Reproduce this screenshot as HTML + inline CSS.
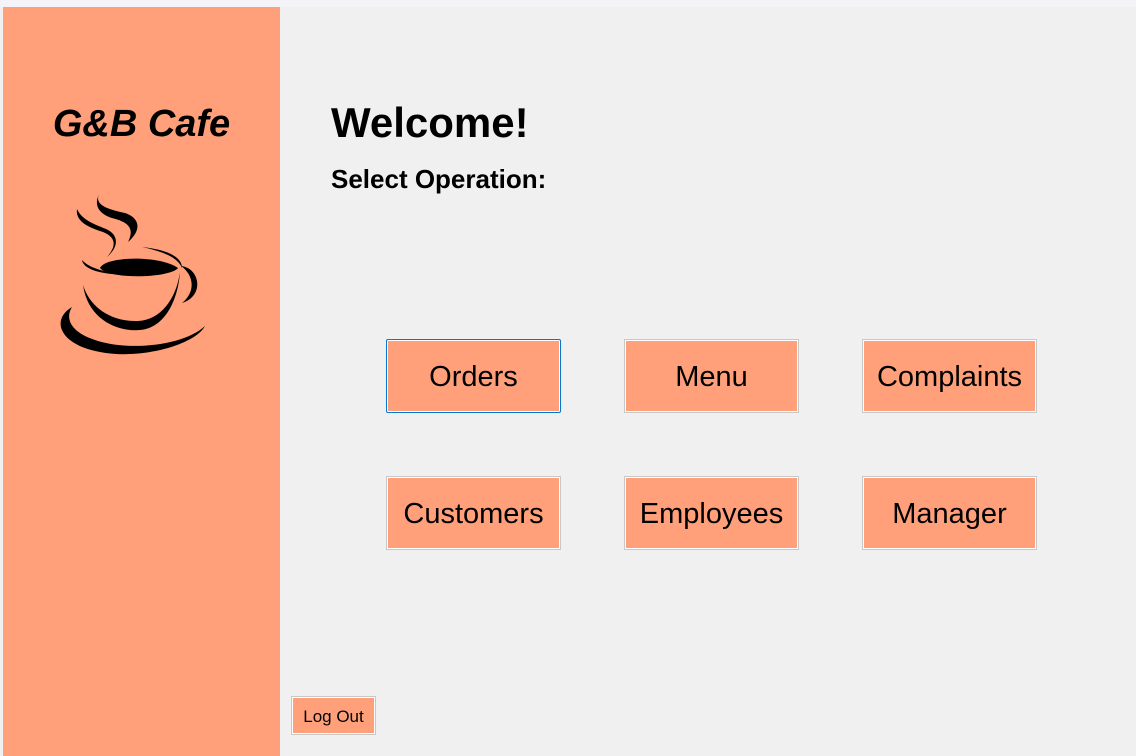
<!DOCTYPE html>
<html><head><style>
body{margin:0;width:1136px;height:756px;background:#f0f0f0;position:relative;overflow:hidden;font-family:"Segoe UI","Liberation Sans","DejaVu Sans",sans-serif}
.top{position:absolute;left:0;top:0;width:1136px;height:7px;background:#f3f3f8}
.edge{position:absolute;left:0;top:7px;width:3px;height:749px;background:#f0f0f0;border-right:0}
.side{position:absolute;left:3px;top:7px;width:277px;height:749px;background:#ffa07a}
.title{position:absolute;left:0;width:283px;top:103px;text-align:center;font-weight:bold;font-style:italic;font-size:38px;color:#000}
h1{position:absolute;left:331px;top:99px;margin:0;font-size:42px;font-weight:bold;color:#000}
h2{position:absolute;left:331px;top:164px;margin:0;font-size:26px;font-weight:bold;color:#000}
.b{position:absolute;width:173px;height:72px;background:#ffa07a;border:1px solid #c8c8c8;box-shadow:inset 0 0 0 1px #fff;display:flex;align-items:center;justify-content:center;font-size:29px;color:#000;box-sizing:content-box;padding-top:2px;height:70px}
.lo{position:absolute;left:291px;top:696px;width:83px;height:37px;background:#ffa07a;border:1px solid #c8c8c8;box-shadow:inset 0 0 0 1px #fff;display:flex;align-items:center;justify-content:center;font-size:17px;padding-top:2px;height:35px}
</style></head><body>
<div class="top"></div>
<div class="edge"></div>
<div class="side"></div>
<div class="title">G&amp;B Cafe</div>
<svg style="position:absolute;left:0;top:0" width="283" height="380" viewBox="0 0 283 380">
<path d="M100 193 C92 205 110 210 125 213 C140 218 142 230 128 242 C135 228 128 222 112 218 C96 213 94 202 100 193Z" fill="#000"/>
<path d="M77 209 C75 222 90 228 103 232 C118 238 115 248 107 257 C120 246 118 234 106 229 C94 224 82 220 77 209Z" fill="#000"/>
<path d="M100 268 C105 256 160 255 178 268 C170 278 110 280 100 268Z" fill="#000"/>
<path d="M142 247 C170 250 182 258 182 268 C178 258 165 252 142 247Z" fill="#000"/>
<path d="M82 260 C84 275 130 280 180 268 C140 278 95 275 82 260Z" fill="#000"/>
<path d="M83 285 C88 320 118 332 140 330 C165 328 178 300 180 272 C176 300 160 320 138 321 C112 322 90 308 83 285Z" fill="#000"/>
<path d="M181 266 C200 268 205 296 182 303 C196 292 194 275 181 266Z" fill="#000"/>
<path d="M72 307 C50 320 60 345 100 352 C140 360 195 345 205 326 C185 345 130 352 95 340 C70 332 65 318 72 307Z" fill="#000"/>
</svg>
<h1>Welcome!</h1>
<h2>Select Operation:</h2>
<div class="b" style="left:386px;top:339px;border-color:#0078d7;border-radius:2px">Orders</div>
<div class="b" style="left:624px;top:339px">Menu</div>
<div class="b" style="left:862px;top:339px">Complaints</div>
<div class="b" style="left:386px;top:476px">Customers</div>
<div class="b" style="left:624px;top:476px">Employees</div>
<div class="b" style="left:862px;top:476px">Manager</div>
<div class="lo">Log Out</div>
</body></html>
